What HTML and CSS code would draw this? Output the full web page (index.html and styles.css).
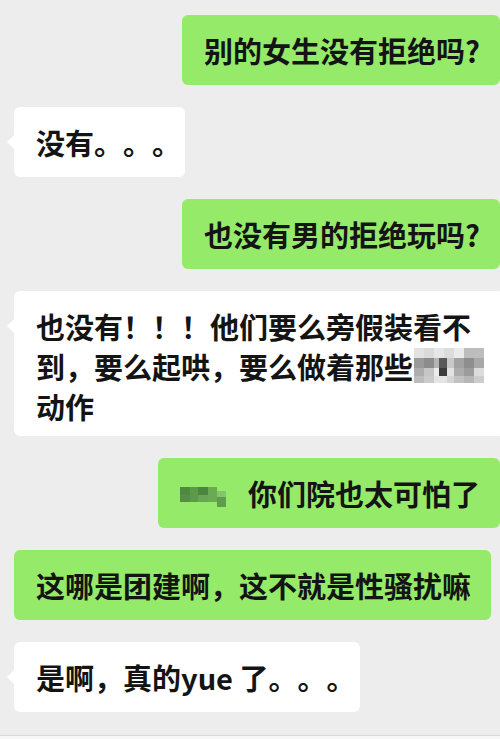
FILE: index.html
```html
<!DOCTYPE html>
<html lang="zh-CN">
<head>
    <meta charset="UTF-8">
    <meta name="viewport" content="width=device-width, initial-scale=1.0">
    <title>聊天记录</title>
    <link rel="stylesheet" href="styles.css">
</head>
<body>
    <div class="chat">
        <div class="row right">
            <div class="bubble green">别的女生没有拒绝吗?</div>
        </div>
        <div class="row left">
            <div class="bubble white tail short">没有。。。</div>
        </div>
        <div class="row right">
            <div class="bubble green">也没有男的拒绝玩吗?</div>
        </div>
        <div class="row left">
            <div class="bubble white tail multi">也没有！！！他们要么旁假装看不<br>到，要么起哄，要么做着那些<svg class="mosaic-gray" width="70" height="35" viewBox="0 0 70 35">
                    <rect x="0" y="0" width="70" height="35" fill="#d4d4d4"/>
                    <rect x="0" y="0" width="10" height="10" fill="#e2e2e2"/>
                    <rect x="10" y="0" width="10" height="10" fill="#dadada"/>
                    <rect x="20" y="0" width="10" height="10" fill="#e6e6e6"/>
                    <rect x="30" y="0" width="10" height="10" fill="#dcdcdc"/>
                    <rect x="40" y="0" width="10" height="10" fill="#ebebeb"/>
                    <rect x="50" y="0" width="20" height="10" fill="#bdbdbd"/>
                    <rect x="0" y="10" width="10" height="10" fill="#9a9a9a"/>
                    <rect x="10" y="10" width="10" height="10" fill="#8c8c8c"/>
                    <rect x="20" y="10" width="5" height="10" fill="#b4b4b4"/>
                    <rect x="25" y="10" width="8" height="10" fill="#5a5a5a"/>
                    <rect x="33" y="10" width="7" height="10" fill="#c9c9c9"/>
                    <rect x="40" y="10" width="10" height="10" fill="#a2a2a2"/>
                    <rect x="50" y="10" width="10" height="10" fill="#8e8e8e"/>
                    <rect x="60" y="10" width="10" height="10" fill="#a8a8a8"/>
                    <rect x="0" y="20" width="10" height="8" fill="#adadad"/>
                    <rect x="10" y="20" width="10" height="8" fill="#c6c6c6"/>
                    <rect x="20" y="20" width="5" height="8" fill="#ececec"/>
                    <rect x="25" y="20" width="8" height="8" fill="#3c3c3c"/>
                    <rect x="33" y="20" width="7" height="8" fill="#e2e2e2"/>
                    <rect x="40" y="20" width="10" height="8" fill="#acacac"/>
                    <rect x="50" y="20" width="10" height="8" fill="#9c9c9c"/>
                    <rect x="60" y="20" width="10" height="8" fill="#dcdcdc"/>
                    <rect x="0" y="28" width="10" height="7" fill="#bcbcbc"/>
                    <rect x="10" y="28" width="10" height="7" fill="#cbcbcb"/>
                    <rect x="20" y="28" width="13" height="7" fill="#e4e4e4"/>
                    <rect x="33" y="28" width="7" height="7" fill="#d4d4d4"/>
                    <rect x="40" y="28" width="10" height="7" fill="#c2c2c2"/>
                    <rect x="50" y="28" width="10" height="7" fill="#b6b6b6"/>
                    <rect x="60" y="28" width="10" height="7" fill="#cdcdcd"/>
                </svg><br>动作</div>
        </div>
        <div class="row right">
            <div class="bubble green">
                <svg class="mosaic-green" width="48" height="20" viewBox="0 0 48 20">
                    <rect x="0" y="0" width="10" height="15" fill="#4f8a3f"/>
                    <rect x="10" y="0" width="8" height="15" fill="#5b9a49"/>
                    <rect x="18" y="0" width="10" height="15" fill="#4c8540"/>
                    <rect x="28" y="0" width="9" height="15" fill="#6aaa55"/>
                    <rect x="0" y="8" width="10" height="7" fill="#558f44"/>
                    <rect x="18" y="8" width="10" height="7" fill="#68a653"/>
                    <rect x="37" y="10" width="9" height="10" fill="#5f9d4c"/>
                    <rect x="37" y="4" width="9" height="6" fill="#86c66a"/>
                </svg>你们院也太可怕了
            </div>
        </div>
        <div class="row left">
            <div class="bubble green">这哪是团建啊，这不就是性骚扰嘛</div>
        </div>
        <div class="row left">
            <div class="bubble white tail short">是啊，真的yue 了。。。</div>
        </div>
    </div>
    <div class="bottom-bar"></div>
</body>
</html>
```

FILE: styles.css
```css
body {
    margin: 0;
    background-color: #ededed;
    font-family: "Noto Sans CJK SC", "Noto Sans", sans-serif;
    color: #141414;
    overflow: hidden;
}
.chat {
    height: 735px;
    padding-top: 15px;
    box-sizing: border-box;
    display: flex;
    flex-direction: column;
    gap: 22px;
    overflow: hidden;
}
.row {
    display: flex;
}
.row.right {
    justify-content: flex-end;
}
.row.left {
    padding-left: 14px;
}
.bubble {
    position: relative;
    font-size: 29px;
    font-weight: 600;
    line-height: 40px;
    padding: 15px 20px 15px 22px;
    border-radius: 6px;
    white-space: nowrap;
    text-spacing-trim: space-all;
    display: flex;
    align-items: center;
}
.bubble.green {
    background-color: #95ea6a;
}
.bubble.white {
    background-color: #ffffff;
}
.bubble.short {
    padding-right: 4px;
}
.bubble.multi {
    display: block;
    padding-bottom: 10px;
}
.tail::before {
    content: "";
    position: absolute;
    left: -7px;
    top: 28px;
    border-top: 7px solid transparent;
    border-bottom: 7px solid transparent;
    border-right: 7px solid #ffffff;
}
.mosaic-gray {
    display: inline-block;
    vertical-align: -4px;
    margin-left: 1px;
}
.mosaic-green {
    flex-shrink: 0;
    margin-right: 20px;
    margin-top: 8px;
}
.bottom-bar {
    height: 4px;
    border-top: 1px solid #dadada;
    background-color: #f7f7f7;
}
```
